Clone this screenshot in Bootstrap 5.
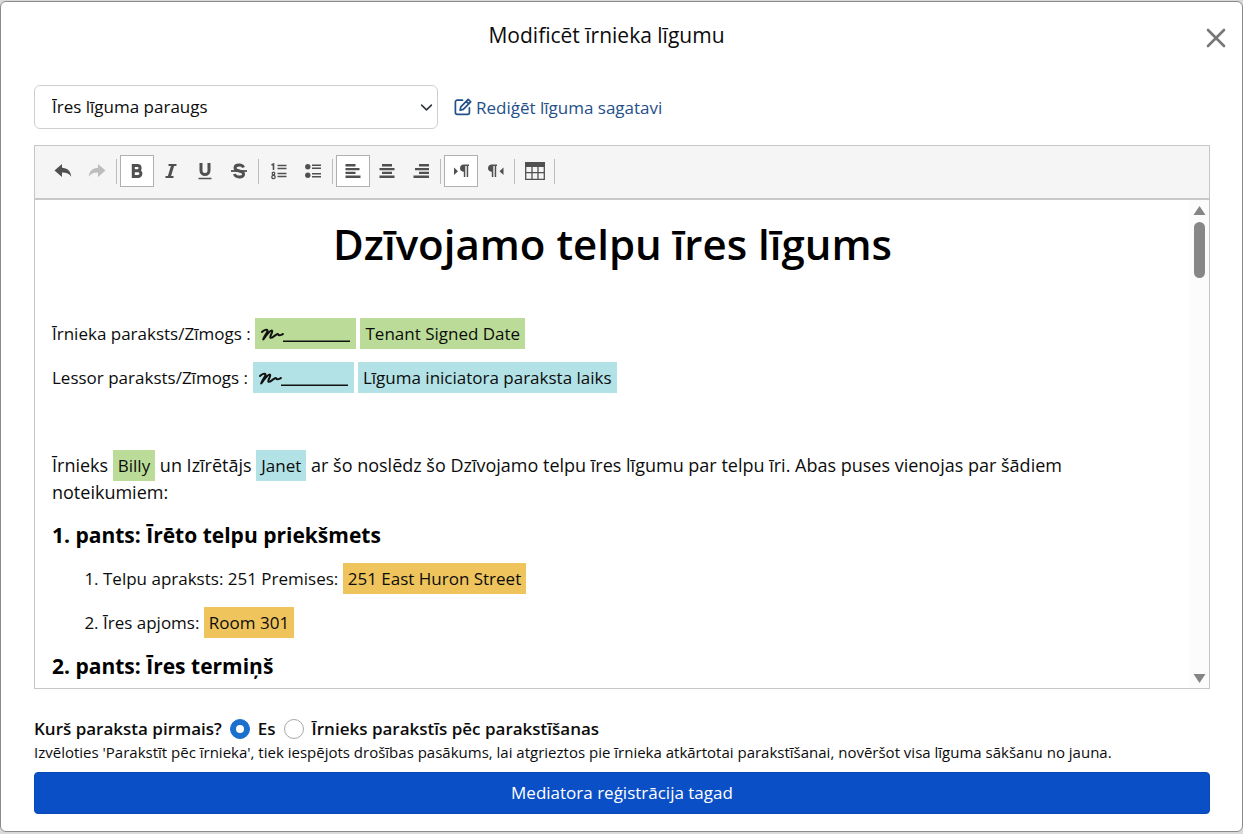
<!DOCTYPE html>
<html lang="lv">
<head>
<meta charset="utf-8">
<meta name="viewport" content="width=device-width, initial-scale=1">
<title>Modificēt īrnieka līgumu</title>
<link href="https://cdn.jsdelivr.net/npm/bootstrap@5.3.0/dist/css/bootstrap.min.css" rel="stylesheet">
<style>
  body { font-family: "Open Sans", "Noto Sans", sans-serif; font-size: 17px; line-height: 27px; color: #0c0c0c; background: #d9dad8; }
  .dialog-frame { border: 1px solid #8a8c8a; border-radius: 6px; background: #fff; margin: 1px 0 2px; height: calc(100vh - 3px); min-height: 560px; }
  .dialog-head { padding: 19px 46px 0 16px; height: 83px; }
  .dialog-title { font-size: 21px; line-height: 28px; font-weight: 400; }
  .close-btn { width: 20px; height: 20px; right: 16px; top: 26px; color: #777; }
  .dialog-body { padding: 0 32px 17px 33px; min-height: 0; }
  .template-select { width: 404px; height: 44px; font-size: 17px; padding: 0 32px 0 17px; color: #0c0c0c; border-color: #cfcfcf; background-position: right 4px center; background-size: 13px 13px; }
  .edit-link { color: #24508a; text-decoration: none; }
  .editor-box { border: 1px solid #c6c6c6; margin-top: 16px; min-height: 0; }
  .editor-bar { background: #f5f5f5; border-bottom: 2px solid #c8c8c8; padding: 9px 11px 11px; }
  .tool { width: 34px; height: 32px; padding: 0; border: 1px solid transparent; background: transparent; color: #505050; display: flex; align-items: center; justify-content: center; }
  .tool:disabled { color: #bdbdbd; }
  .tool.active { background: #fff; border-color: #b0b0b0; }
  .tool-sep { width: 1px; height: 25px; margin: 0 3px 0 2px; background: #bcbcbc; }
  .doc-area { min-height: 0; }
  .doc { padding: 16px 17px; scrollbar-width: none; }
  .doc::-webkit-scrollbar { display: none; }
  .doc h1 { font-size: 42px; line-height: 56px; font-weight: 600; margin-bottom: 48px; color: #000; }
  .doc h2 { font-size: 21px; line-height: 26px; font-weight: 700; margin-bottom: 17px; color: #000; }
  .doc p { margin-bottom: 17px; }
  .doc .intro { font-size: 18px; padding-right: 32px; margin-bottom: 16px; }
  .doc ol { padding-left: 51px; margin-bottom: 0; }
  .doc li { margin-bottom: 17px; }
  .tag { padding: 4px 5px; font-size: 17px; }
  .tag-green { background: #bbdc98; }
  .tag-cyan { background: #b2e2e6; }
  .tag-gold { background: #efc45c; }
  .sign { vertical-align: text-bottom; }
  .rail { width: 19px; background: #fcfcfc; padding: 6px 0 5px; color: #858585; }
  .rail-thumb { width: 11px; height: 56px; border-radius: 6px; background: #878787; margin-top: 7px; }
  .who-row { margin-top: 26px; font-weight: 600; }
  .who-row .form-check-input { width: 20px; height: 20px; margin: 0; border-color: #a8a8a8; }
  .who-row .form-check-input:checked { background-color: #1a70cc; border-color: #1a70cc; background-size: 16px 16px; }
  .hint { font-size: 15px; line-height: 20px; }
  .submit-btn { background: #0b4fc6; border-color: #0a48b8; font-size: 17px; height: 42px; padding: 0; border-radius: 4px; margin-top: 10px; }
</style>
</head>
<body>
<main class="dialog-frame d-flex flex-column position-relative">
  <header class="dialog-head flex-shrink-0">
    <h1 class="dialog-title text-center m-0">Modificēt īrnieka līgumu</h1>
    <button type="button" class="close-btn btn p-0 border-0 position-absolute d-flex" aria-label="Aizvērt">
      <svg width="20" height="20" viewBox="0 0 20 20" fill="none" stroke="currentColor" stroke-width="2.600" stroke-linecap="round"><path d="M2 2l16 16M18 2L2 18"/></svg>
    </button>
  </header>
  <div class="dialog-body d-flex flex-column flex-grow-1">
    <div class="d-flex align-items-center gap-3 flex-shrink-0">
      <select class="form-select template-select" aria-label="Līguma sagatave"><option>Īres līguma paraugs</option></select>
      <a href="#" class="edit-link d-inline-flex align-items-center gap-1">
        <svg width="18" height="18" viewBox="0 0 18 18" fill="none" stroke="currentColor" stroke-width="1.700" stroke-linejoin="round" stroke-linecap="round"><path d="M8.500 2.200H3.200a1.800 1.800 0 0 0-1.800 1.800v10.600a1.800 1.800 0 0 0 1.800 1.800h10.400a1.800 1.800 0 0 0 1.800-1.800V9.800"/><path d="M14.200 1.300l2.500 2.500-7.400 7.600-3.200.8.700-3.300zM12.200 3.300l2.600 2.500"/></svg>
        <span>Rediģēt līguma sagatavi</span>
      </a>
    </div>

    <section class="editor-box d-flex flex-column flex-grow-1">
      <div class="editor-bar d-flex align-items-center flex-shrink-0" role="toolbar" aria-label="Formatēšana">
        <button class="tool" type="button" aria-label="Atsaukt"><svg width="18" height="16" viewBox="0 0 18 16" fill="currentColor"><path d="M0.500 7.500L8 1v3.800c5 .2 8.700 3 9.300 9-2-3-5-4.300-9.300-4.200V14z"/></svg></button>
        <button class="tool" type="button" aria-label="Atcelt atsaukšanu" disabled><svg width="18" height="16" viewBox="0 0 18 16" fill="currentColor"><path d="M17.500 7.500L10 1v3.800c-5 .2-8.700 3-9.300 9 2-3 5-4.300 9.300-4.200V14z"/></svg></button>
        <span class="tool-sep"></span>
        <button class="tool active" type="button" aria-label="Treknraksts"><svg width="14" height="16" viewBox="0 0 14 16" fill="none" stroke="currentColor" stroke-width="3"><path d="M3 2.500h4.500a2.600 2.600 0 0 1 0 5.200H3M3 7.700h5a2.900 2.900 0 0 1 0 5.800H3M3.300 1v14"/></svg></button>
        <button class="tool" type="button" aria-label="Slīpraksts"><svg width="12" height="16" viewBox="0 0 12 16" fill="none" stroke="currentColor"><path stroke-width="2" d="M3.500 2h8M0.500 14h8"/><path stroke-width="3" d="M7.800 2L4.200 14"/></svg></button>
        <button class="tool" type="button" aria-label="Pasvītrojums"><svg width="14" height="18" viewBox="0 0 14 18" fill="none" stroke="currentColor"><path stroke-width="3" d="M3 1v7.500a4 4 0 0 0 8 0V1"/><path stroke-width="1.500" d="M0.500 16.500h13"/></svg></button>
        <button class="tool" type="button" aria-label="Pārsvītrojums"><svg width="16" height="16" viewBox="0 0 16 16" fill="none" stroke="currentColor"><path stroke-width="2.900" d="M12.500 4.500C12 2.800 10.300 2 8.200 2 5.800 2 4 3 4 5c0 4 8.600 2 8.600 6 0 2-1.800 3-4.300 3-2.600 0-4.300-1-4.800-3"/><path stroke-width="1.800" d="M0 8h16"/></svg></button>
        <span class="tool-sep"></span>
        <button class="tool" type="button" aria-label="Numurēts saraksts"><svg width="16" height="18" viewBox="0 0 16 18" fill="none" stroke="currentColor"><path stroke-width="1.600" d="M0.500 3L2.500 2v6"/><path stroke-width="1.400" d="M6.500 3.500h9M6.500 6.500h9M6.500 11.500h9M6.500 14.500h9"/><circle cx="2.500" cy="11.500" r="1.300" stroke-width="1.300"/><circle cx="2.500" cy="15" r="1.700" stroke-width="1.300"/></svg></button>
        <button class="tool" type="button" aria-label="Aizzīmju saraksts"><svg width="16" height="16" viewBox="0 0 16 16" fill="none" stroke="currentColor"><path stroke-width="1.400" d="M7 2.200h9M7 5.200h9M7 10.800h9M7 13.800h9"/><circle cx="2.800" cy="3.700" r="2.700" fill="currentColor" stroke="none"/><circle cx="2.800" cy="12.300" r="2.700" fill="currentColor" stroke="none"/></svg></button>
        <span class="tool-sep"></span>
        <button class="tool active" type="button" aria-label="Līdzināt pa kreisi"><svg width="16" height="14" viewBox="0 0 16 14" stroke="currentColor" stroke-width="2.400"><path d="M0.500 1.300h10M0.500 5.100h14M0.500 8.900h10M0.500 12.700h15"/></svg></button>
        <button class="tool" type="button" aria-label="Centrēt"><svg width="16" height="14" viewBox="0 0 16 14" stroke="currentColor" stroke-width="2.400"><path d="M3 1.300h10M0.500 5.100h15M3 8.900h10M0.500 12.700h15"/></svg></button>
        <button class="tool" type="button" aria-label="Līdzināt pa labi"><svg width="16" height="14" viewBox="0 0 16 14" stroke="currentColor" stroke-width="2.400"><path d="M6 1.300h10M2 5.100h14M6 8.900h10M0.500 12.700H16"/></svg></button>
        <span class="tool-sep"></span>
        <button class="tool active" type="button" aria-label="No kreisās uz labo"><svg width="17" height="14" viewBox="0 0 17 14" fill="currentColor"><path d="M1 3.500L5 7.300 1 11zM16 .5v1.600h-.8V13h-1.500V2.100h-1.400V13h-1.500V7.800C8.500 7.800 7 6.300 7 4.200S8.500.5 10.800.5z"/></svg></button>
        <button class="tool" type="button" aria-label="No labās uz kreiso"><svg width="17" height="14" viewBox="0 0 17 14" fill="currentColor"><path d="M16.500 3.500L12.500 7.300l4 3.700zM10 .5v1.600h-.8V13H7.700V2.100H6.300V13H4.800V7.800C2.500 7.800 1 6.300 1 4.200S2.500.5 4.800.5z"/></svg></button>
        <span class="tool-sep"></span>
        <button class="tool" type="button" aria-label="Tabula"><svg width="20" height="18" viewBox="0 0 20 18" fill="none" stroke="currentColor" stroke-width="1.300"><path fill="currentColor" d="M0.700.7h18.600v3.600H.7z"/><path d="M.7.7h18.600v16.600H.7zM.7 10.700h18.600M7 4v13M13 4v13"/></svg></button>
        <span class="tool-sep"></span>
      </div>
      <div class="doc-area d-flex flex-grow-1">
        <article class="doc flex-grow-1 overflow-auto">
          <h1 class="text-center">Dzīvojamo telpu īres līgums</h1>
          <p>Īrnieka paraksts/Zīmogs : <span class="tag tag-green"><svg class="sign" width="91" height="20" viewBox="0 0 91 20" fill="none" stroke="#111" stroke-linecap="round" stroke-linejoin="round"><path stroke-width="2" d="M2 7c1.800-1.800 5.200-3.200 5.500-1.800.4 1.800-3.300 5.800-4.300 9.300C5.800 11 10 5 12 5.600c1.600.8-3 6.400-1.500 7.200 1.600.7 5.500-3.800 7.200-3.800 1.200.1.300 1.300 1.500 1.300 1.500 0 2.700-.8 3.700-1.300"/><path stroke-width="1.500" stroke-linecap="butt" d="M23 16.200h67"/></svg></span> <span class="tag tag-green">Tenant Signed Date</span></p>
          <p>Lessor paraksts/Zīmogs : <span class="tag tag-cyan"><svg class="sign" width="91" height="20" viewBox="0 0 91 20" fill="none" stroke="#111" stroke-linecap="round" stroke-linejoin="round"><path stroke-width="2" d="M2 7c1.800-1.800 5.200-3.200 5.500-1.800.4 1.800-3.300 5.800-4.300 9.300C5.800 11 10 5 12 5.600c1.600.8-3 6.400-1.500 7.200 1.600.7 5.500-3.800 7.200-3.800 1.200.1.300 1.300 1.500 1.300 1.500 0 2.700-.8 3.700-1.300"/><path stroke-width="1.500" stroke-linecap="butt" d="M23 16.200h67"/></svg></span> <span class="tag tag-cyan">Līguma iniciatora paraksta laiks</span></p>
          <p><br></p>
          <p class="intro">Īrnieks <span class="tag tag-green">Billy</span> un Izīrētājs <span class="tag tag-cyan">Janet</span> ar šo noslēdz šo Dzīvojamo telpu īres līgumu par telpu īri. Abas puses vienojas par šādiem <span class="text-nowrap">noteikumiem:</span></p>
          <h2>1. pants: Īrēto telpu priekšmets</h2>
          <ol>
            <li>Telpu apraksts: 251 Premises: <span class="tag tag-gold">251 East Huron Street</span></li>
            <li>Īres apjoms: <span class="tag tag-gold">Room 301</span></li>
          </ol>
          <h2>2. pants: Īres termiņš</h2>
        </article>
        <div class="rail d-flex flex-column align-items-center flex-shrink-0" aria-hidden="true">
          <svg width="13" height="9" viewBox="0 0 13 9" fill="currentColor"><path d="M6.500 0L12.500 9H.5z"/></svg>
          <div class="rail-thumb"></div>
          <svg class="mt-auto" width="13" height="9" viewBox="0 0 13 9" fill="currentColor"><path d="M.5 0h12l-6 9z"/></svg>
        </div>
      </div>
    </section>

    <div class="who-row d-flex align-items-center flex-shrink-0" role="radiogroup" aria-labelledby="who">
      <span id="who">Kurš paraksta pirmais?</span>
      <input class="form-check-input ms-2" type="radio" name="first" id="me" checked><label class="ms-2" for="me">Es</label>
      <input class="form-check-input ms-2" type="radio" name="first" id="tenant"><label class="ms-2" for="tenant">Īrnieks parakstīs pēc parakstīšanas</label>
    </div>
    <div class="hint flex-shrink-0">Izvēloties 'Parakstīt pēc īrnieka', tiek iespējots drošības pasākums, lai atgrieztos pie īrnieka atkārtotai parakstīšanai, novēršot visa līguma sākšanu no jauna.</div>
    <button type="submit" class="btn btn-primary submit-btn w-100 flex-shrink-0">Mediatora reģistrācija tagad</button>
  </div>
</main>
<script src="https://cdn.jsdelivr.net/npm/bootstrap@5.3.0/dist/js/bootstrap.bundle.min.js"></script>
</body>
</html>
